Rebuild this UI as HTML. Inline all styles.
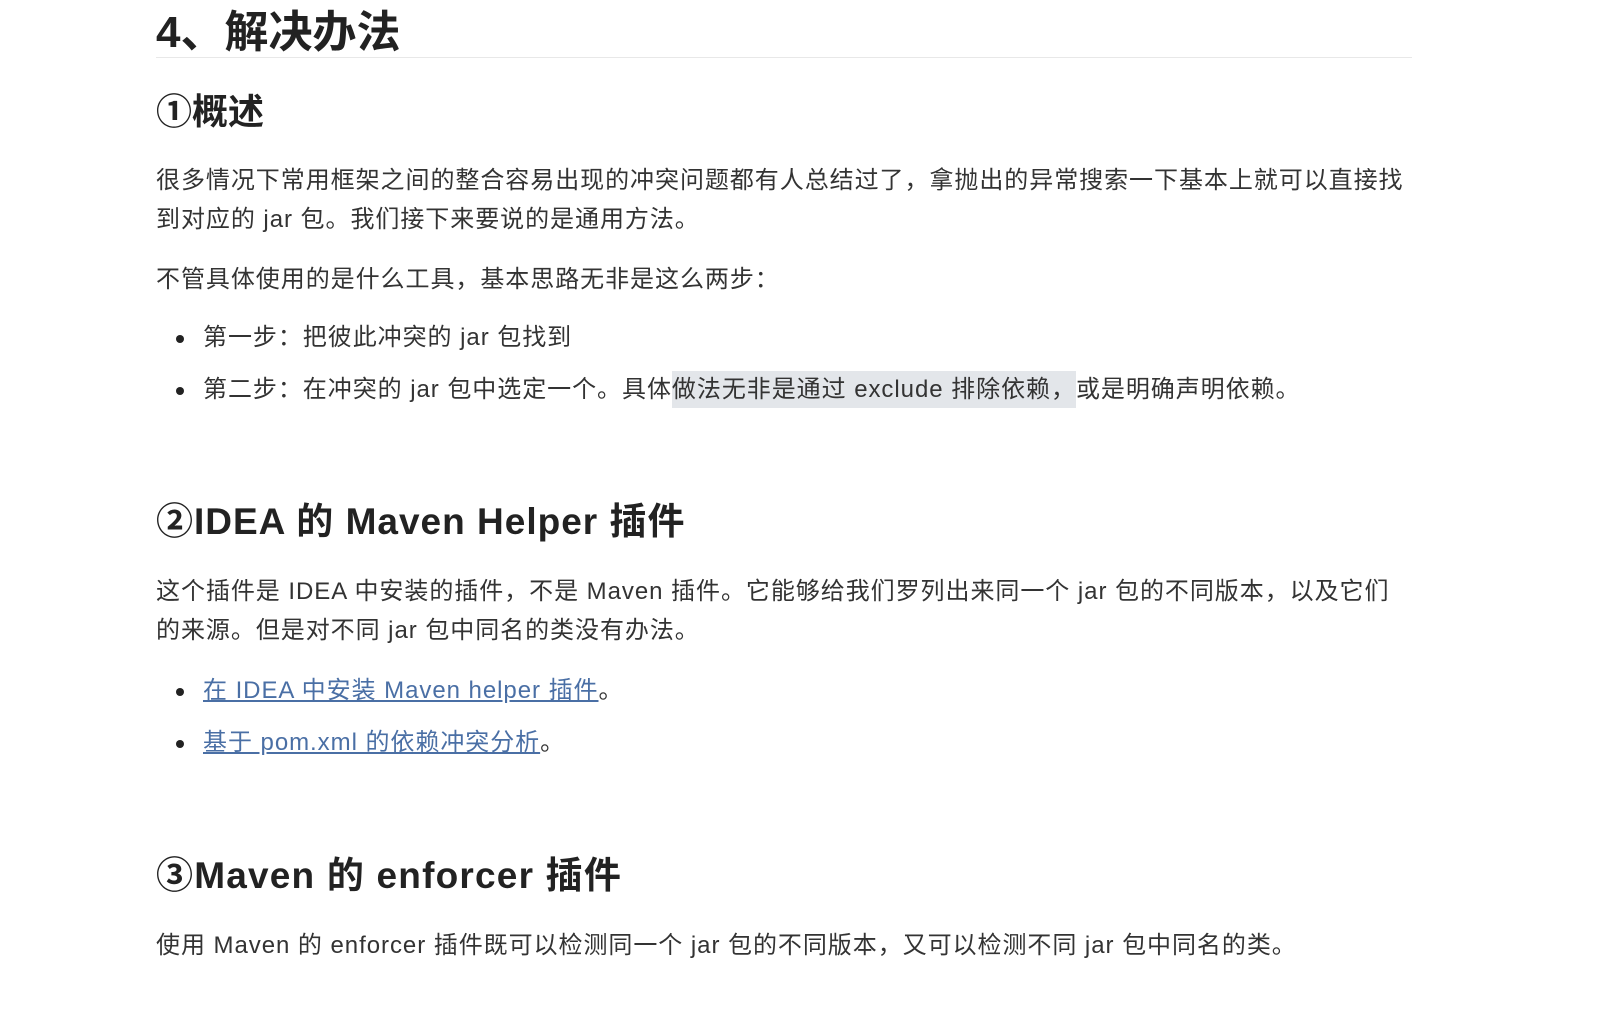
<!DOCTYPE html>
<html><head><meta charset="utf-8">
<style>
html,body{margin:0;padding:0;background:#fff;width:1618px;height:1012px;overflow:hidden}
body{font-family:"Liberation Sans","Noto Sans CJK SC",sans-serif;color:#333}
.l{position:absolute;left:156px;white-space:nowrap;font-size:24px;letter-spacing:0.95px;line-height:30px}
.h{position:absolute;left:156px;white-space:nowrap;font-weight:bold;color:#222}
.li{left:203px}
.dot{position:absolute;left:176px;width:8px;height:8px;border-radius:50%;background:#222}
a{color:#4a6fa5;text-decoration:underline}
.sel{background:#e3e6ea}
</style></head><body>
<div class="h" style="top:6px;font-size:44px;line-height:54px">4、解决办法</div>
<div style="position:absolute;left:156px;top:57px;width:1256px;height:1px;background:#e8e8e8"></div>
<div class="h" style="top:90px;font-size:36px;line-height:44px">①概述</div>
<div class="l" style="top:166px">很多情况下常用框架之间的整合容易出现的冲突问题都有人总结过了，拿抛出的异常搜索一下基本上就可以直接找</div>
<div class="l" style="top:205px">到对应的 jar 包。我们接下来要说的是通用方法。</div>
<div class="l" style="top:265px">不管具体使用的是什么工具，基本思路无非是这么两步：</div>
<div class="dot" style="top:335px"></div>
<div class="l li" style="top:323px">第一步：把彼此冲突的 jar 包找到</div>
<div class="dot" style="top:387px"></div>
<div class="l li" style="top:375px">第二步：在冲突的 jar 包中选定一个。具体<span class="sel" style="padding:5px 0">做法无非是通过 exclude 排除依赖，</span>或是明确声明依赖。</div>
<div class="h" style="top:500px;font-size:37px;letter-spacing:1px;line-height:44px">②IDEA 的 Maven Helper 插件</div>
<div class="l" style="top:577px">这个插件是 IDEA 中安装的插件，不是 Maven 插件。它能够给我们罗列出来同一个 jar 包的不同版本，以及它们</div>
<div class="l" style="top:616px">的来源。但是对不同 jar 包中同名的类没有办法。</div>
<div class="dot" style="top:688px"></div>
<div class="l li" style="top:676px"><a>在 IDEA 中安装 Maven helper 插件</a>。</div>
<div class="dot" style="top:740px"></div>
<div class="l li" style="top:728px"><a>基于 pom.xml 的依赖冲突分析</a>。</div>
<div class="h" style="top:854px;font-size:37px;letter-spacing:1.2px;line-height:44px">③Maven 的 enforcer 插件</div>
<div class="l" style="top:931px">使用 Maven 的 enforcer 插件既可以检测同一个 jar 包的不同版本，又可以检测不同 jar 包中同名的类。</div>
</body></html>
